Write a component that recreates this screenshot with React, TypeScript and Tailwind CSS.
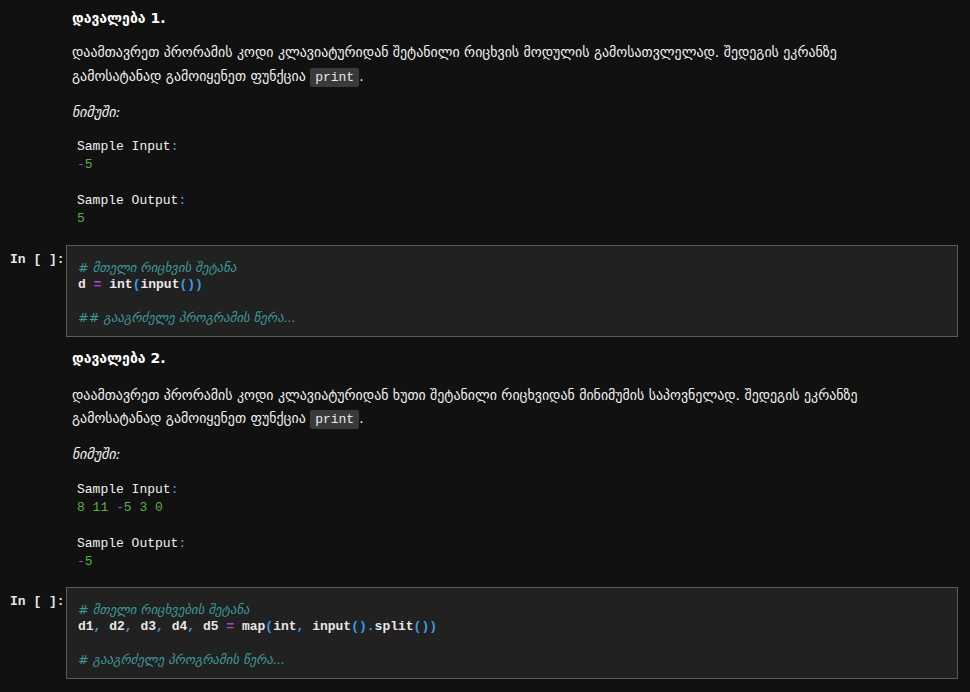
import React from "react";

const geo = { fontFamily: '"DejaVu Sans", "Noto Sans", sans-serif' };
const mono = { fontFamily: '"Liberation Mono", "DejaVu Sans Mono", monospace' };

function Pc({ children }: { children: React.ReactNode }) {
  return <span className="text-[#3a9ee8]">{children}</span>;
}
function Op({ children }: { children: React.ReactNode }) {
  return <span className="text-[#b146d6]">{children}</span>;
}
function Num({ children }: { children: React.ReactNode }) {
  return <span className="text-[#5cae4a]">{children}</span>;
}
function Cm({ children }: { children: React.ReactNode }) {
  return (
    <span
      className="italic font-normal text-[#3d9a9a] text-[12.8px]"
      style={{ fontFamily: '"DejaVu Sans", "Liberation Mono", monospace' }}
    >
      {children}
    </span>
  );
}

function InlineCode() {
  return (
    <span
      className="bg-[#3a3a3a] text-[#e8e8e8] px-[5px] py-[2px] text-[13px] leading-[16px] rounded-[2px]"
      style={mono}
    >
      print
    </span>
  );
}

function Line({ children }: { children?: React.ReactNode }) {
  return <div className="h-[16.5px] leading-[16.5px] overflow-visible">{children}</div>;
}

function Markdown({
  title,
  line1,
  line2,
  input,
  output,
  headTop,
  paraGap,
  paraLh,
  nimGap,
  sampleGap,
}: {
  title: string;
  line1: string;
  line2: string;
  input: React.ReactNode;
  output: React.ReactNode;
  headTop: string;
  paraGap: string;
  paraLh: string;
  nimGap: string;
  sampleGap: string;
}) {
  return (
    <div className={`pl-[72px] ${headTop} text-[#f0f0f0]`} style={geo}>
      <div className="text-[14px] leading-[20px] font-bold text-white">{title}</div>
      <div className={`${paraGap} text-[13.9px] whitespace-nowrap`}>
        <div className={paraLh}>{line1}</div>
        <div className={paraLh}>
          {line2} <InlineCode />.
        </div>
      </div>
      <div className={`${nimGap} h-[24px] text-[14px] leading-[24px] italic`}>ნიმუში:</div>
      <div className={`${sampleGap} pl-[5px] text-[13px] whitespace-pre`} style={mono}>
        <div className="h-[18px] leading-[18px]">
          Sample Input<Pc>:</Pc>
        </div>
        <div className="h-[18px] leading-[18px]">{input}</div>
        <div className="h-[18px]" />
        <div className="h-[18px] leading-[18px]">
          Sample Output<Pc>:</Pc>
        </div>
        <div className="h-[18px] leading-[18px]">{output}</div>
      </div>
    </div>
  );
}

function CodeCell({ children, top }: { children: React.ReactNode; top: string }) {
  return (
    <div className={`flex ${top}`}>
      <div
        className="w-[66px] shrink-0 pl-[10px] pt-[6px] text-[13px] leading-[18px] font-bold text-[#e6e6e6] whitespace-pre"
        style={mono}
      >
        In [ ]:
      </div>
      <div
        className="w-[892px] h-[92px] bg-[#212121] border border-[#5c5c5c] pl-[11px] pt-[14px] text-[13px] text-[#e8e8e8] font-bold whitespace-pre"
        style={mono}
      >
        {children}
      </div>
    </div>
  );
}

export default function App() {
  return (
    <div className="w-[970px] h-[692px] bg-[#111111] overflow-hidden">
      <Markdown
        title="დავალება 1."
        line1="დაამთავრეთ პრორამის კოდი კლავიატურიდან შეტანილი რიცხვის მოდულის გამოსათვლელად. შედეგის ეკრანზე"
        line2="გამოსატანად გამოიყენეთ ფუნქცია"
        input={
          <>
            <Op>-</Op>
            <Num>5</Num>
          </>
        }
        output={<Num>5</Num>}
        headTop="pt-[8px]"
        paraGap="mt-[12px]"
        paraLh="h-[24px] leading-[24px]"
        nimGap="mt-[12px]"
        sampleGap="mt-[14px]"
      />
      <CodeCell top="mt-[17px]">
        <Line>
          <Cm># მთელი რიცხვის შეტანა</Cm>
        </Line>
        <Line>
          d <Op>=</Op> int<Pc>(</Pc>input<Pc>())</Pc>
        </Line>
        <Line />
        <Line>
          <Cm>## გააგრძელე პროგრამის წერა...</Cm>
        </Line>
      </CodeCell>
      <Markdown
        title="დავალება 2."
        line1="დაამთავრეთ პრორამის კოდი კლავიატურიდან ხუთი შეტანილი რიცხვიდან მინიმუმის საპოვნელად. შედეგის ეკრანზე"
        line2="გამოსატანად გამოიყენეთ ფუნქცია"
        input={
          <>
            <Num>8 11 </Num>
            <Op>-</Op>
            <Num>5 3 0</Num>
          </>
        }
        output={
          <>
            <Op>-</Op>
            <Num>5</Num>
          </>
        }
        headTop="pt-[11px]"
        paraGap="mt-[16px]"
        paraLh="h-[23px] leading-[23px]"
        nimGap="mt-[12px]"
        sampleGap="mt-[15px]"
      />
      <CodeCell top="mt-[16px]">
        <Line>
          <Cm># მთელი რიცხვების შეტანა</Cm>
        </Line>
        <Line>
          d1<Pc>,</Pc> d2<Pc>,</Pc> d3<Pc>,</Pc> d4<Pc>,</Pc> d5 <Op>=</Op> map<Pc>(</Pc>int<Pc>,</Pc> input<Pc>().</Pc>split<Pc>())</Pc>
        </Line>
        <Line />
        <Line>
          <Cm># გააგრძელე პროგრამის წერა...</Cm>
        </Line>
      </CodeCell>
    </div>
  );
}
